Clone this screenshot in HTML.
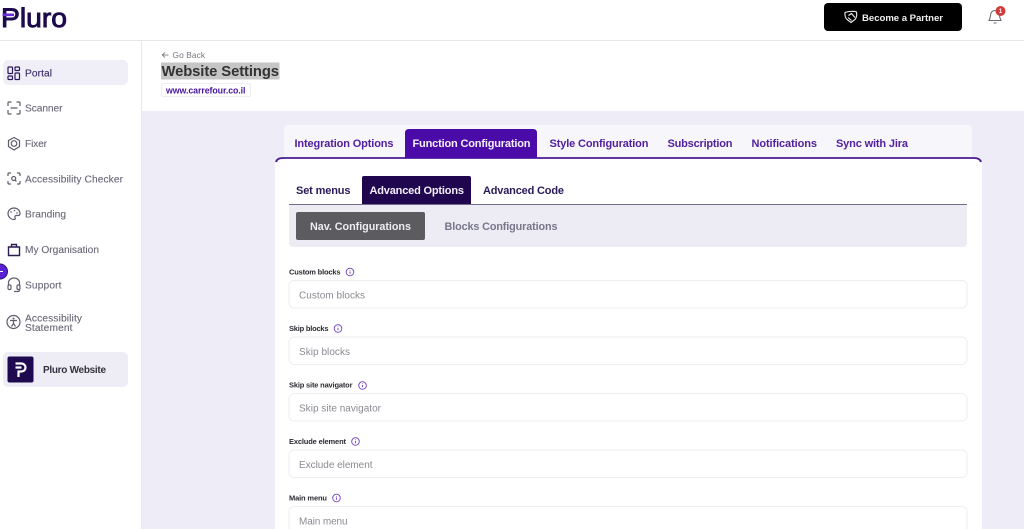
<!DOCTYPE html>
<html lang="en"><head><meta charset="utf-8"><title>Website Settings</title>
<style>
html,body{margin:0;padding:0;width:1024px;height:529px;overflow:hidden;background:#fff}
svg{display:block;font-family:"Liberation Sans",sans-serif}
.nav{font-size:10.2px;fill:#6b6878;stroke:#6b6878;stroke-width:.12}
.lab{font-size:7.5px;font-weight:bold;fill:#2c2b33}
.ph{font-size:10px;fill:#8b8a92}
.tab{font-size:11px;font-weight:bold;fill:#52219c}
.sub{font-size:11px;font-weight:bold;fill:#2a1a58}
.ic{fill:none;stroke:#5f5d6b;stroke-width:1.2}
.ii{fill:none;stroke:#6d3fc0;stroke-width:.9}
</style></head><body>
<svg width="1024" height="529" viewBox="0 0 1024 529" xmlns="http://www.w3.org/2000/svg">
<rect width="1024" height="529" fill="#fff"/>
<rect x="142" y="111" width="882" height="418" fill="#eeedf7"/>
<rect x="0" y="40" width="1024" height="1" fill="#e6e6e8"/>
<rect x="141" y="41" width="1" height="488" fill="#e8e8ec"/>

<!-- logo -->
<text x="1" y="27" font-size="27" fill="#1c0a4c" stroke="#1c0a4c" stroke-width=".9" textLength="66" lengthAdjust="spacingAndGlyphs">Pluro</text>
<rect x="2.500" y="13.500" width="11.500" height="2.600" fill="#6a2bd9"/>

<!-- header -->
<rect x="824" y="3" width="138" height="28" rx="4" fill="#000"/>
<g fill="none" stroke="#f2f2f2" stroke-width="1.100"><path d="M845 12.500c3-1.200 9-1.600 11.500-.5 .5 3-.2 6-1.500 7.500l-4 3-4-3c-1.500-1.500-2.300-4.500-2-7z"/><path d="M848.500 15.500l3-2 3.500 4M848 17.500l3.500 3"/></g>
<text x="862" y="21" font-size="9.600" font-weight="bold" fill="#eeeeee" textLength="81">Become a Partner</text>
<path d="M995 10.500c-3 0-4.500 2.500-4.500 5 0 2-1 3.500-1.500 5h12c-.5-1.500-1.500-3-1.500-5 0-2.500-1.500-5-4.500-5zM993.500 23h3" fill="none" stroke="#6a6a72" stroke-width="1.100"/>
<circle cx="1000.500" cy="11" r="5" fill="#d23b3b"/>
<text x="1000.500" y="13" font-size="6" font-weight="bold" fill="#fff" text-anchor="middle">1</text>

<!-- sidebar -->
<rect x="3" y="60" width="125" height="25" rx="5" fill="#f0eff8"/>
<g fill="none" stroke="#2a1a5c" stroke-width="1.200"><rect x="8" y="67" width="4.500" height="6.500" rx=".8"/><rect x="15" y="67" width="4.500" height="3.500" rx=".8"/><rect x="8" y="76" width="4.500" height="3.500" rx=".8"/><rect x="15" y="73" width="4.500" height="6.500" rx=".8"/></g>
<text x="25" y="76.500" class="nav" style="fill:#3a2a66;stroke:#3a2a66" textLength="27">Portal</text>

<path class="ic" d="M8 106v-3q0-1 1-1h2.500M16.500 102h2.500q1 0 1 1v3M8 110v3q0 1 1 1h2.500M16.500 114h2.500q1 0 1-1v-3M10.500 108h7"/>
<text x="25" y="111.500" class="nav" textLength="37.500">Scanner</text>

<path class="ic" d="M14 137.500l5.500 3v6l-5.500 3.500-5.500-3.500v-6z"/><circle class="ic" cx="14" cy="143.500" r="2.800"/>
<text x="25" y="147" class="nav" textLength="22">Fixer</text>

<path class="ic" d="M8 176v-2q0-1 1-1h2M17 173h2q1 0 1 1v2M8 181v2q0 1 1 1h2M17 184h2q1 0 1-1v-2"/><circle class="ic" cx="13.700" cy="178.500" r="2"/><path class="ic" d="M15 180l1.500 1.500"/>
<text x="25" y="182.500" class="nav" textLength="98">Accessibility Checker</text>

<path class="ic" d="M14 208c-3.500 0-6 2.500-6 5.500s2.500 6 6 6c1.500 0 1.500-1 1-2-.5-1.200.3-2 1.500-2h2c1 0 1.500-1 1.500-2 0-3-2.500-5.500-6-5.500z"/><circle cx="11" cy="212" r=".8" fill="#5f5d6b"/><circle cx="14.500" cy="210.500" r=".8" fill="#5f5d6b"/><circle cx="17" cy="213" r=".8" fill="#5f5d6b"/>
<text x="25" y="217.500" class="nav" textLength="41">Branding</text>

<path d="M8.500 247h11v8.500h-11zM11.500 247v-2.500h5v2.500" fill="none" stroke="#2c1c50" stroke-width="1.400"/>
<text x="25" y="253" class="nav" textLength="74">My Organisation</text>

<path class="ic" d="M8.500 285v-2c0-3 2.300-5 5.500-5s5.500 2 5.500 5v2M14 291.500h4c1.200 0 1.500-.8 1.500-2"/><rect class="ic" x="8" y="285" width="3" height="4.500" rx="1.200"/><rect class="ic" x="17" y="285" width="3" height="4.500" rx="1.200"/>
<text x="25" y="288.500" class="nav" textLength="36.500">Support</text>

<circle class="ic" cx="13.500" cy="322" r="6.500"/><circle cx="13.500" cy="318.500" r="1" fill="#5f5d6b"/><path class="ic" d="M10 320.500h7M13.500 320.500v3l-2 3M13.500 323.500l2 3" stroke-width="1"/>
<text x="25" y="321.500" class="nav" textLength="57">Accessibility</text>
<text x="25" y="331" class="nav" textLength="47.500">Statement</text>

<rect x="3" y="352" width="125" height="35" rx="5" fill="#eeedf5"/>
<rect x="7.500" y="356.500" width="26" height="26" rx="2" fill="#1f0a50"/>
<path d="M15.500 363.500h6a4 4 0 0 1 0 8h-3v5.500M15.500 367.500h6" fill="none" stroke="#fff" stroke-width="2.200"/>
<text x="43" y="373" font-size="10" font-weight="bold" fill="#35323f" textLength="63">Pluro Website</text>

<circle cx="0" cy="271.500" r="7.500" fill="#5a22d4" stroke="#2a1270" stroke-width="1"/>
<rect x="0" y="271" width="3" height="1" fill="#fff"/>

<!-- page head -->
<path d="M165 52.500l-2.700 2.500 2.700 2.500M162.500 55h6" fill="none" stroke="#666" stroke-width=".8"/>
<text x="172.500" y="58" font-size="8.300" fill="#77757f" textLength="32.500">Go Back</text>
<rect x="161" y="62.500" width="118.500" height="17" fill="#c6c6c6"/>
<text x="161.500" y="76" font-size="14.800" font-weight="bold" fill="#333333" textLength="117.500">Website Settings</text>
<rect x="161.500" y="83.500" width="89" height="13" rx="1.500" fill="#fff" stroke="#eeeef2"/>
<text x="166" y="93.500" font-size="8.800" font-weight="bold" fill="#47139b" textLength="79.500">www.carrefour.co.il</text>

<!-- tabs -->
<path d="M284 158v-29q0-4 4-4h680q4 0 4 4v29z" fill="#f6f6fb"/>
<path d="M275 529V166q0-8 8-8h691q8 0 8 8v363z" fill="#fff"/>
<path d="M276 162q1-4 7-4h691q6 0 7 4" fill="none" stroke="#4a1a96" stroke-width="1.800"/>
<path d="M405 158v-25q0-4 4-4h124q4 0 4 4v25z" fill="#4b0ba8"/>
<text x="294.500" y="147" class="tab" textLength="99">Integration Options</text>
<text x="412.500" y="147" class="tab" style="fill:#f4f0fb" textLength="118">Function Configuration</text>
<text x="549.500" y="147" class="tab" textLength="99">Style Configuration</text>
<text x="667.500" y="147" class="tab" textLength="65">Subscription</text>
<text x="751.500" y="147" class="tab" textLength="65.500">Notifications</text>
<text x="836" y="147" class="tab" textLength="72">Sync with Jira</text>

<!-- sub tabs -->
<path d="M362 204.500V178q0-2 2-2h105q2 0 2 2v26.500z" fill="#20054f"/>
<rect x="289" y="204" width="678" height="1" fill="#726d86"/>
<text x="296" y="194" class="sub" textLength="54.500">Set menus</text>
<text x="369.500" y="194" class="sub" style="fill:#f3f0fa" textLength="94.500">Advanced Options</text>
<text x="483" y="194" class="sub" textLength="81">Advanced Code</text>

<path d="M289 205h678v38q0 4-4 4H293q-4 0-4-4z" fill="#edecf5"/>
<rect x="296" y="212" width="129" height="28" rx="2" fill="#5b5b60"/>
<text x="310" y="230" font-size="10.800" font-weight="bold" fill="#eeeef0" textLength="101">Nav. Configurations</text>
<text x="444.500" y="230" font-size="10.800" font-weight="bold" fill="#77758a" textLength="113">Blocks Configurations</text>

<!-- fields -->
<g fill="#fff" stroke="#eeeef1">
<rect x="289" y="280.500" width="678" height="27.500" rx="5"/>
<rect x="289" y="337" width="678" height="27.500" rx="5"/>
<rect x="289" y="393.500" width="678" height="27.500" rx="5"/>
<rect x="289" y="450" width="678" height="27.500" rx="5"/>
<rect x="289" y="506.500" width="678" height="40" rx="5"/>
</g>
<text x="289" y="274.500" class="lab" textLength="51.500">Custom blocks</text>
<circle class="ii" cx="350" cy="272" r="3.800"/><path class="ii" d="M350 271.500v2.300M350 270v.6"/>
<text x="299" y="298.500" class="ph" textLength="66">Custom blocks</text>

<text x="289" y="331" class="lab" textLength="39.500">Skip blocks</text>
<circle class="ii" cx="338" cy="328.500" r="3.800"/><path class="ii" d="M338 328v2.300M338 326.500v.6"/>
<text x="299" y="355" class="ph" textLength="51">Skip blocks</text>

<text x="289" y="387.500" class="lab" textLength="63.500">Skip site navigator</text>
<circle class="ii" cx="362.500" cy="385.500" r="3.800"/><path class="ii" d="M362.500 385v2.300M362.500 383.500v.6"/>
<text x="299" y="411.500" class="ph" textLength="82">Skip site navigator</text>

<text x="289" y="444" class="lab" textLength="57">Exclude element</text>
<circle class="ii" cx="355.500" cy="441.500" r="3.800"/><path class="ii" d="M355.500 441v2.300M355.500 439.500v.6"/>
<text x="299" y="468" class="ph" textLength="73.500">Exclude element</text>

<text x="289" y="500.500" class="lab" textLength="38">Main menu</text>
<circle class="ii" cx="336.500" cy="498" r="3.800"/><path class="ii" d="M336.500 497.500v2.300M336.500 496v.6"/>
<text x="299" y="524.500" class="ph" textLength="48.500">Main menu</text>
</svg>
</body></html>
